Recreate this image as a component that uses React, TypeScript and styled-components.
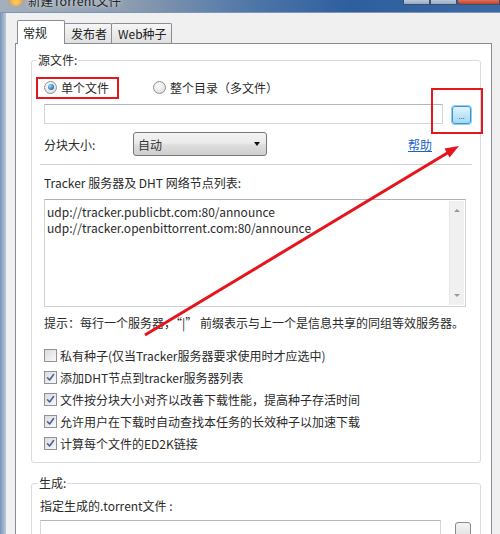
import styled, { createGlobalStyle } from "styled-components";

const GlobalStyle = createGlobalStyle`
  html, body { margin: 0; padding: 0; }
  body {
    width: 500px;
    height: 534px;
    overflow: hidden;
    background: #f0f0f0;
    font-family: "Noto Sans CJK SC", "Noto Sans", sans-serif;
    font-size: 12px;
    color: #2a2a2a;
  }
`;

const trackers = [
  "udp://tracker.publicbt.com:80/announce",
  "udp://tracker.openbittorrent.com:80/announce",
];

const options = [
  { label: "私有种子(仅当Tracker服务器要求使用时才应选中)", checked: false },
  { label: "添加DHT节点到tracker服务器列表", checked: true },
  { label: "文件按分块大小对齐以改善下载性能，提高种子存活时间", checked: true },
  { label: "允许用户在下载时自动查找本任务的长效种子以加速下载", checked: true },
  { label: "计算每个文件的ED2K链接", checked: true },
];

const App = () => {
  return (
    <Window>
      <GlobalStyle />
      <TitleBar>
        <AppIcon />
        <TitleText>新建Torrent文件</TitleText>
        <CaptionButtons>
          <CaptionButton $w={27} />
          <CaptionButton $w={27} />
          <CaptionButton $w={43} $close />
        </CaptionButtons>
      </TitleBar>
      <Main>
        <FrameEdge />
        <Body>
          <TabStrip>
            <Tab $w={48} $active>常规</Tab>
            <Tab $w={48}>发布者</Tab>
            <Tab $w={61}>Web种子</Tab>
          </TabStrip>
          <TabPanel>
            <GroupBox $pad={12}>
              <GroupLabel $shift={7}>源文件:</GroupLabel>
              <RadioRow>
                <RadioOption $w={109}>
                  <RadioCircle $checked />
                  单个文件
                </RadioOption>
                <RadioOption>
                  <RadioCircle />
                  整个目录（多文件）
                </RadioOption>
              </RadioRow>
              <FileRow $gap={9}>
                <TextInput />
                <BrowseButton $hover>...</BrowseButton>
              </FileRow>
              <ChunkRow>
                <ChunkLabel>分块大小:</ChunkLabel>
                <Select>
                  <span>自动</span>
                  <SelectArrow />
                </Select>
                <HelpLink>帮助</HelpLink>
              </ChunkRow>
              <Separator />
              <FieldLabel $top={10}>Tracker 服务器及 DHT 网络节点列表:</FieldLabel>
              <TrackerBox>
                <TrackerText>
                  {trackers.map((t) => (
                    <div key={t}>{t}</div>
                  ))}
                </TrackerText>
                <Scrollbar>
                  <ScrollArrow $up />
                  <ScrollArrow />
                </Scrollbar>
              </TrackerBox>
              <FieldLabel $top={8}>
                提示：每行一个服务器，“|” 前缀表示与上一个是信息共享的同组等效服务器。
              </FieldLabel>
              <CheckList>
                {options.map((o) => (
                  <CheckRow key={o.label}>
                    <CheckBox>
                      {o.checked && (
                        <svg width="9" height="9" viewBox="0 0 9 9">
                          <path
                            d="M1.5 4.8 L3.6 7 L7.6 1.6"
                            fill="none"
                            stroke="#4c5f9c"
                            strokeWidth="1.6"
                            strokeLinecap="round"
                            strokeLinejoin="round"
                          />
                        </svg>
                      )}
                    </CheckBox>
                    {o.label}
                  </CheckRow>
                ))}
              </CheckList>
            </GroupBox>
            <GroupBox $pad={8} $gapTop={20}>
              <GroupLabel $shift={2}>生成:</GroupLabel>
              <FieldLabel $top={8}>指定生成的.torrent文件 :</FieldLabel>
              <FileRow $gap={14} $top={6}>
                <TextInput />
                {/* only the top of this button is on screen */}
                <BrowseButton $small />
              </FileRow>
            </GroupBox>
          </TabPanel>
        </Body>
      </Main>

      {/* red annotation marks on top of the screenshot */}
      <Mark style={{ left: 36, top: 77, width: 83, height: 22 }} />
      <Mark style={{ left: 431, top: 88, width: 52, height: 46 }} />
      <ArrowLayer width="500" height="534" viewBox="0 0 500 534">
        <line x1="145" y1="335" x2="449" y2="152" stroke="#e8141b" strokeWidth="3" />
        <polygon points="459,146 449.5,157.5 444.5,148.5" fill="#e8141b" />
      </ArrowLayer>
    </Window>
  );
};

const Window = styled.div`
  position: relative;
  width: 500px;
  height: 534px;
  overflow: hidden;
  display: flex;
  flex-direction: column;
`;

const TitleBar = styled.div`
  height: 12px;
  flex-shrink: 0;
  display: flex;
  overflow: hidden;
  border-bottom: 1px solid #7d96b6;
  background: linear-gradient(90deg, #a5afbb 0%, #8e9db0 25%, #4f77a8 50%, #2d5f9e 70%, #3a6aa5 100%);
`;

const AppIcon = styled.div`
  width: 14px;
  height: 14px;
  flex-shrink: 0;
  margin: -8px 0 0 9px;
  border-radius: 50%;
  background: radial-gradient(circle at 50% 70%, #ffd66e, #f0870f 80%);
`;

const TitleText = styled.div`
  margin: -7px 0 0 5px;
  font-size: 12.5px;
  line-height: 16px;
  color: #262626;
  text-shadow: 0 0 5px rgba(255, 255, 255, 0.8);
  white-space: nowrap;
`;

const CaptionButtons = styled.div`
  margin-left: auto;
  display: flex;
  align-items: flex-start;
`;

const CaptionButton = styled.div<{ $w: number; $close?: boolean }>`
  width: ${(p) => p.$w}px;
  height: 5px;
  box-sizing: border-box;
  border: 1px solid #3d4f69;
  border-top: none;
  border-radius: ${(p) => (p.$close ? "0 0 0 4px" : "0")};
  background: ${(p) =>
    p.$close ? "linear-gradient(#d8735f, #c2412c)" : "linear-gradient(#b9c7d8, #97abc4)"};
`;

const Main = styled.div`
  flex: 1;
  display: flex;
  min-height: 0;
`;

const FrameEdge = styled.div`
  width: 6px;
  flex-shrink: 0;
  background: linear-gradient(90deg, #7894b6, #b8c9db);
`;

const Body = styled.div`
  flex: 1;
  min-width: 0;
  display: flex;
  flex-direction: column;
  padding: 7px 8px 0 9px;
`;

const TabStrip = styled.div`
  height: 24px;
  flex-shrink: 0;
  display: flex;
  align-items: flex-end;
  padding-left: 2px;
  margin-bottom: -1px;
  position: relative;
  z-index: 1;
`;

const Tab = styled.div<{ $w: number; $active?: boolean }>`
  width: ${(p) => p.$w}px;
  height: ${(p) => (p.$active ? 24 : 20)}px;
  margin-bottom: ${(p) => (p.$active ? 0 : 1)}px;
  margin-right: -1px;
  box-sizing: border-box;
  display: flex;
  align-items: center;
  padding-left: ${(p) => (p.$active ? 5 : 6)}px;
  border: 1px solid #8a8d93;
  border-bottom: none;
  border-radius: 2px 2px 0 0;
  background: ${(p) => (p.$active ? "#fff" : "linear-gradient(#f6f6f6, #e0e0e0)")};
  line-height: 16px;
  color: #222;
  white-space: nowrap;
`;

const TabPanel = styled.div`
  flex: 1;
  display: flex;
  flex-direction: column;
  background: #fff;
  border: 1px solid #898c95;
  border-bottom: none;
  padding: 16px 10px 0 15px;
`;

const GroupBox = styled.div<{ $pad: number; $gapTop?: number }>`
  display: flex;
  flex-direction: column;
  flex-shrink: 0;
  margin-top: ${(p) => p.$gapTop ?? 0}px;
  padding: 0 9px 8px ${(p) => p.$pad}px;
  border: 1px solid #d5dde3;
  border-radius: 3px;
`;

const GroupLabel = styled.div<{ $shift: number }>`
  align-self: flex-start;
  margin: -8px 0 0 -${(p) => p.$shift}px;
  padding: 0 1px;
  background: #fff;
  line-height: 14px;
`;

const RadioRow = styled.div`
  margin-top: 10px;
  height: 20px;
  display: flex;
  align-items: center;
`;

const RadioOption = styled.div<{ $w?: number }>`
  width: ${(p) => (p.$w ? `${p.$w}px` : "auto")};
  display: flex;
  align-items: center;
  gap: 4px;
  white-space: nowrap;
`;

const RadioCircle = styled.span<{ $checked?: boolean }>`
  width: 13px;
  height: 13px;
  box-sizing: border-box;
  border-radius: 50%;
  border: 1px solid #8f9396;
  background: radial-gradient(circle at 40% 35%, #fdfdfd, #d6d6d6);
  display: flex;
  align-items: center;
  justify-content: center;

  &::after {
    content: "";
    width: 6px;
    height: 6px;
    border-radius: 50%;
    background: ${(p) =>
      p.$checked ? "radial-gradient(circle at 35% 35%, #9bdcff, #1b5c9c 80%)" : "transparent"};
  }
`;

const FileRow = styled.div<{ $gap: number; $top?: number }>`
  margin-top: ${(p) => p.$top ?? 7}px;
  height: 20px;
  display: flex;
  align-items: flex-start;
  gap: ${(p) => p.$gap}px;
`;

const TextInput = styled.div`
  flex: 1;
  height: 20px;
  box-sizing: border-box;
  border: 1px solid #d3d7dc;
  border-top-color: #b3b7bd;
  background: #fff;
`;

const BrowseButton = styled.div<{ $hover?: boolean; $small?: boolean }>`
  width: ${(p) => (p.$small ? 16 : 19)}px;
  height: 18px;
  margin-top: 2px;
  flex-shrink: 0;
  box-sizing: border-box;
  border: 1px solid ${(p) => (p.$hover ? "#3b93cd" : "#8a8a8a")};
  border-radius: 3px;
  background: ${(p) =>
    p.$hover ? "linear-gradient(#e3f4fc, #bfe6f9 50%, #a6d9f4)" : "linear-gradient(#f4f4f4, #dedede)"};
  box-shadow: ${(p) => (p.$hover ? "0 0 0 1px #8fd0f2" : "none")};
  display: flex;
  align-items: flex-end;
  justify-content: center;
  font-family: "DejaVu Sans", sans-serif;
  font-size: 7px;
  line-height: 8px;
  letter-spacing: 0;
  color: #333;
  padding-bottom: 2px;
`;

const ChunkRow = styled.div`
  margin-top: 8px;
  height: 24px;
  display: flex;
  align-items: center;
`;

const ChunkLabel = styled.div`
  width: 89px;
`;

const Select = styled.div`
  width: 134px;
  height: 24px;
  box-sizing: border-box;
  display: flex;
  align-items: center;
  justify-content: space-between;
  padding: 0 6px 0 4px;
  border: 1px solid #777;
  border-radius: 3px;
  background: linear-gradient(#f3f3f3, #ebebeb 45%, #dddddd 55%, #cfcfcf);
  color: #333;
`;

const SelectArrow = styled.span`
  width: 0;
  height: 0;
  border-left: 3.5px solid transparent;
  border-right: 3.5px solid transparent;
  border-top: 4px solid #111;
`;

const HelpLink = styled.span`
  margin: 0 39px 0 auto;
  color: #1d63c4;
  text-decoration: underline;
`;

const Separator = styled.div`
  margin: 8px -1px 0 -4px;
  height: 1px;
  background: #d2d2d2;
`;

const FieldLabel = styled.div<{ $top: number }>`
  margin-top: ${(p) => p.$top}px;
  line-height: 16px;
  white-space: nowrap;
`;

const TrackerBox = styled.div`
  margin: 8px 5px 0 0;
  height: 108px;
  box-sizing: border-box;
  display: flex;
  border: 1px solid #d0d4d9;
  border-top-color: #adb1b7;
  background: #fff;
`;

const TrackerText = styled.div`
  flex: 1;
  padding: 4px 0 0 2px;
  line-height: 15.5px;
  color: #2a2a2a;
`;

const Scrollbar = styled.div`
  width: 15px;
  margin: 1px 1px 1px 0;
  background: #f0f0f0;
  border-left: 1px solid #e8e8e8;
  display: flex;
  flex-direction: column;
  justify-content: space-between;
  align-items: center;
  padding: 8px 0;
  box-sizing: border-box;
`;

const ScrollArrow = styled.span<{ $up?: boolean }>`
  width: 0;
  height: 0;
  border-left: 3.5px solid transparent;
  border-right: 3.5px solid transparent;
  ${(p) => (p.$up ? "border-bottom: 3.5px solid #9a9a9a;" : "border-top: 3.5px solid #9a9a9a;")}
`;

const CheckList = styled.div`
  margin-top: 13px;
  display: flex;
  flex-direction: column;
`;

const CheckRow = styled.div`
  height: 22px;
  display: flex;
  align-items: center;
  gap: 3px;
  white-space: nowrap;
`;

const CheckBox = styled.span`
  width: 13px;
  height: 13px;
  box-sizing: border-box;
  flex-shrink: 0;
  border: 1px solid #8f9396;
  background: linear-gradient(135deg, #dcdcdc, #f8f8f8);
  display: flex;
  align-items: center;
  justify-content: center;
`;

const Mark = styled.div`
  position: absolute;
  box-sizing: border-box;
  border: 2px solid #e5171d;
  pointer-events: none;
`;

const ArrowLayer = styled.svg`
  position: absolute;
  left: 0;
  top: 0;
  pointer-events: none;
`;

export default App;
